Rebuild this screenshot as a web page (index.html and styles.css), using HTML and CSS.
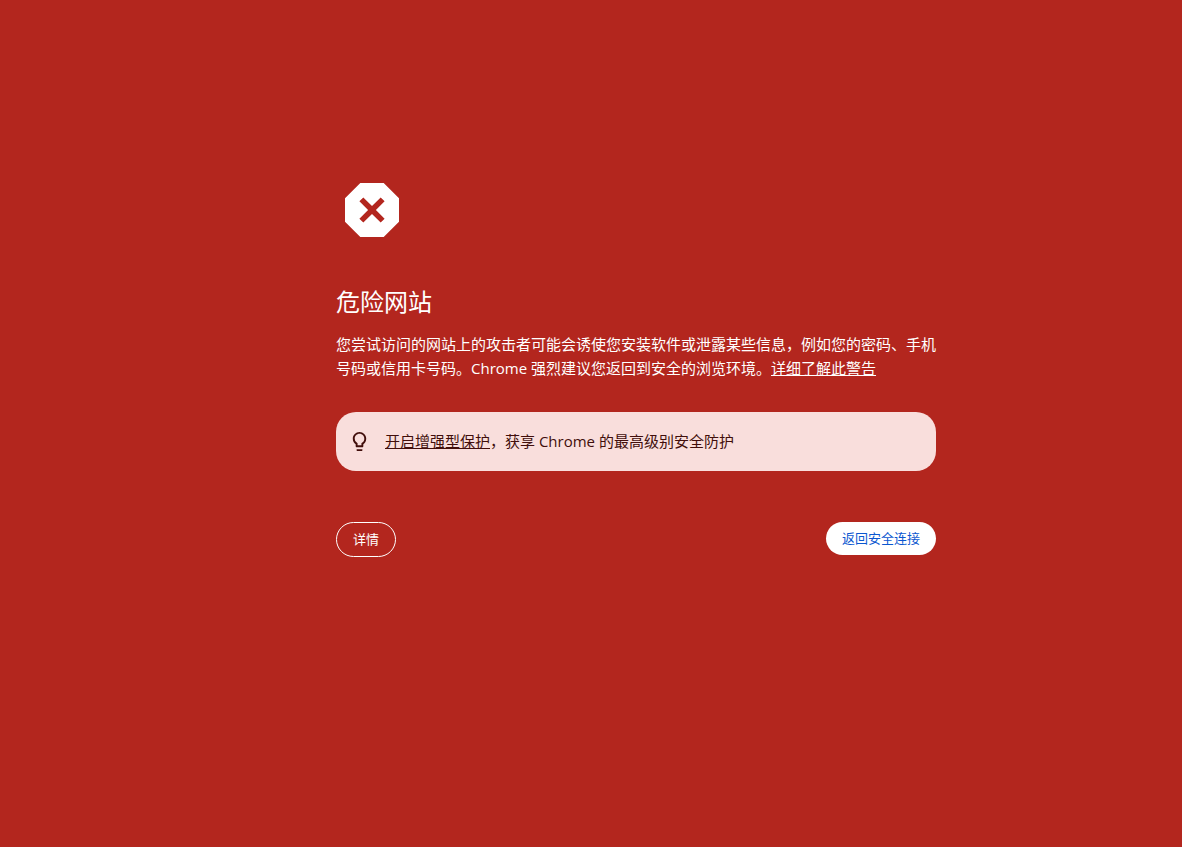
FILE: index.html
```html
<!DOCTYPE html>
<html lang="zh-CN">
<head>
    <meta charset="UTF-8">
    <meta name="viewport" content="width=device-width, initial-scale=1">
    <title>安全性错误</title>
    <link rel="stylesheet" href="styles.css">
</head>
<body>
    <main class="interstitial">
        <svg class="danger-icon" viewBox="0 0 24 24" aria-hidden="true">
            <path fill="currentColor" fill-rule="evenodd" d="M15.9 3H8.1L3 8.1v7.8L8.1 21h7.8l5.1-5.1V8.1L15.9 3zM16.2 14.900 14.9 16.200 12 13.300 9.1 16.200 7.8 14.900 10.700 12 7.8 9.1 9.1 7.8 12 10.700 14.9 7.8 16.2 9.1 13.300 12z"/>
        </svg>
        <h1>危险网站</h1>
        <p class="message">您尝试访问的网站上的攻击者可能会诱使您安装软件或泄露某些信息，例如您的密码、手机号码或信用卡号码。Chrome 强烈建议您返回到安全的浏览环境。<a href="#">详细了解此警告</a></p>
        <div class="protection">
            <svg class="bulb-icon" viewBox="0 0 24 24" aria-hidden="true">
                <path fill="currentColor" d="M9 21c0 .55.45 1 1 1h4c.55 0 1-.45 1-1v-1H9v1zm3-19C8.14 2 5 5.14 5 9c0 2.38 1.19 4.47 3 5.74V17c0 .55.45 1 1 1h6c.55 0 1-.45 1-1v-2.26c1.81-1.27 3-3.36 3-5.74 0-3.86-3.14-7-7-7zm2.85 11.1-.85.6V16h-4v-2.3l-.85-.6A4.997 4.997 0 0 1 7 9c0-2.76 2.24-5 5-5s5 2.24 5 5c0 1.63-.8 3.16-2.15 4.1z"/>
            </svg>
            <p><a href="#">开启增强型保护</a>，获享 Chrome 的最高级别安全防护</p>
        </div>
        <div class="buttons">
            <button type="button" class="details">详情</button>
            <button type="button" class="primary">返回安全连接</button>
        </div>
    </main>
</body>
</html>
```
FILE: styles.css
```css
body {
    margin: 0;
    padding: 174px 0 40px 90px;
    background-color: #b3261e;
    color: white;
    font-family: "Open Sans", "Noto Sans CJK SC", sans-serif;
    font-size: 15px;
    line-height: 24px;
}
.interstitial {
    max-width: 600px;
    margin: 0 auto;
}
.danger-icon {
    display: block;
    width: 72px;
    height: 72px;
}
h1 {
    margin: 40px 0 14px;
    font-size: 24px;
    font-weight: normal;
    line-height: 32px;
}
p {
    margin: 0;
}
a {
    color: inherit;
}
.protection {
    display: flex;
    align-items: center;
    gap: 14px;
    margin-top: 32px;
    padding: 17px 12px 18px;
    border-radius: 20px;
    background-color: #f9dedc;
    color: #410e0b;
}
.bulb-icon {
    width: 23px;
    height: 23px;
}
.buttons {
    display: flex;
    justify-content: space-between;
    align-items: flex-start;
    margin-top: 51px;
}
button {
    padding: 6px 16px;
    border: none;
    border-radius: 20px;
    font-family: inherit;
    font-size: 13px;
    line-height: 21px;
    cursor: pointer;
}
.details {
    border: 1px solid white;
    background-color: transparent;
    color: white;
}
.primary {
    background-color: white;
    color: #0b57d0;
}
```
